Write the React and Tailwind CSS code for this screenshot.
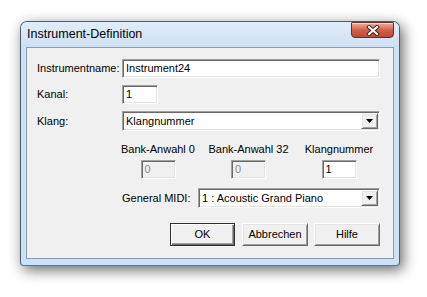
const sunken =
  "border border-t-[#a0a0a0] border-l-[#a0a0a0] border-b-white border-r-white shadow-[inset_1px_1px_0_#696969,inset_-1px_-1px_0_#e3e3e3]";

const raised =
  "border border-t-white border-l-white border-b-[#696969] border-r-[#696969] shadow-[inset_1px_1px_0_#e3e3e3,inset_-1px_-1px_0_#a0a0a0]";

function TextBox({ value, width, disabled }) {
  return (
    <div
      className={`${sunken} ${width} h-[19px] flex items-center pl-[3px] ${
        disabled ? "bg-[#f0f0f0] text-[#8a8a8a]" : "bg-white text-black"
      }`}
    >
      {value}
    </div>
  );
}

function Combo({ value, width }) {
  return (
    <div className={`${sunken} ${width} h-[20px] bg-white flex items-center pl-[3px] pr-[1px]`}>
      <span className="flex-1">{value}</span>
      <div className={`${raised} w-[17px] h-[16px] bg-[#f0f0f0] flex items-center justify-center`}>
        <svg width="7" height="4" viewBox="0 0 7 4">
          <path d="M0 0h7L3.5 4z" fill="#000" />
        </svg>
      </div>
    </div>
  );
}

function Button({ label, width, primary }) {
  return (
    <div
      className={`${width} h-[23px] bg-[#f0f0f0] flex items-center justify-center ${
        primary
          ? "border border-[#303030] shadow-[inset_1px_1px_0_#fff,inset_-1px_-1px_0_#696969,inset_-2px_-2px_0_#a0a0a0]"
          : raised
      }`}
    >
      {label}
    </div>
  );
}

export default function App() {
  return (
    <div
      className="w-[427px] h-[297px] bg-white overflow-hidden pt-[21px] pl-[20px] text-[11px] text-black"
      style={{ fontFamily: '"Liberation Sans", Arial, sans-serif' }}
    >
      <div className="w-[380px] h-[245px] flex flex-col rounded-t-[7px] rounded-b-[4px] border border-[#4f5d6e] border-b-[#3f7fae] bg-[#cde0f4] shadow-[3px_4px_14px_rgba(0,0,0,0.6)]">
        {/* title bar */}
        <div className="h-[25px] flex justify-between rounded-t-[6px] bg-gradient-to-b from-[#e2ecf8] via-[#d8e7f8] to-[#cde0f4]">
          <div className="pl-[6px] self-center text-[12.5px] text-black">Instrument-Definition</div>
          <div className="mr-[5px] w-[43px] h-[16px] rounded-b-[4px] rounded-t-[1px] border border-[#6e2a20] bg-gradient-to-b from-[#eab0a0] via-[#d0604a] to-[#c5472f] shadow-[inset_0_1px_0_rgba(255,255,255,0.5)] flex items-center justify-center">
            <svg width="14" height="11" viewBox="0 0 14 11">
              <path d="M3 2l8 7M11 2l-8 7" stroke="#4a1d16" strokeWidth="4" strokeLinecap="square" />
              <path d="M3 2l8 7M11 2l-8 7" stroke="#fff" strokeWidth="2.2" strokeLinecap="square" />
            </svg>
          </div>
        </div>

        {/* client area */}
        <div className="mx-[5px] h-[212px] bg-[#f0f0f0] border border-[#8b9cb0] pl-[10px] pt-[11px]">
          <div className="w-[343px] flex flex-col">
            <div className="flex items-center">
              <div className="w-[85px]">Instrumentname:</div>
              <TextBox value="Instrument24" width="w-[258px]" />
            </div>
            <div className="flex items-center mt-[7px]">
              <div className="w-[85px]">Kanal:</div>
              <TextBox value="1" width="w-[36px]" />
            </div>
            <div className="flex items-center mt-[7px]">
              <div className="w-[85px]">Klang:</div>
              <Combo value="Klangnummer" width="w-[258px]" />
            </div>

            <div className="ml-[76px] mt-[12px] grid grid-cols-[90px_91px_90px]">
              {[
                ["Bank-Anwahl 0", "0", true],
                ["Bank-Anwahl 32", "0", true],
                ["Klangnummer", "1", false],
              ].map(([label, value, disabled]) => (
                <div key={label} className="flex flex-col items-center">
                  <div className="h-[13px] leading-[13px] whitespace-nowrap">{label}</div>
                  <div className="mt-[4px]">
                    <TextBox value={value} width="w-[35px]" disabled={disabled} />
                  </div>
                </div>
              ))}
            </div>

            <div className="ml-[85px] mt-[9px] flex items-center">
              <div className="w-[76px]">General MIDI:</div>
              <Combo value="1 : Acoustic Grand Piano" width="w-[182px]" />
            </div>

            <div className="mt-[15px] flex justify-end">
              <Button label="OK" width="w-[65px]" primary />
              <div className="ml-[7px]">
                <Button label="Abbrechen" width="w-[66px]" />
              </div>
              <div className="ml-[6px]">
                <Button label="Hilfe" width="w-[66px]" />
              </div>
            </div>
          </div>
        </div>
      </div>
    </div>
  );
}
